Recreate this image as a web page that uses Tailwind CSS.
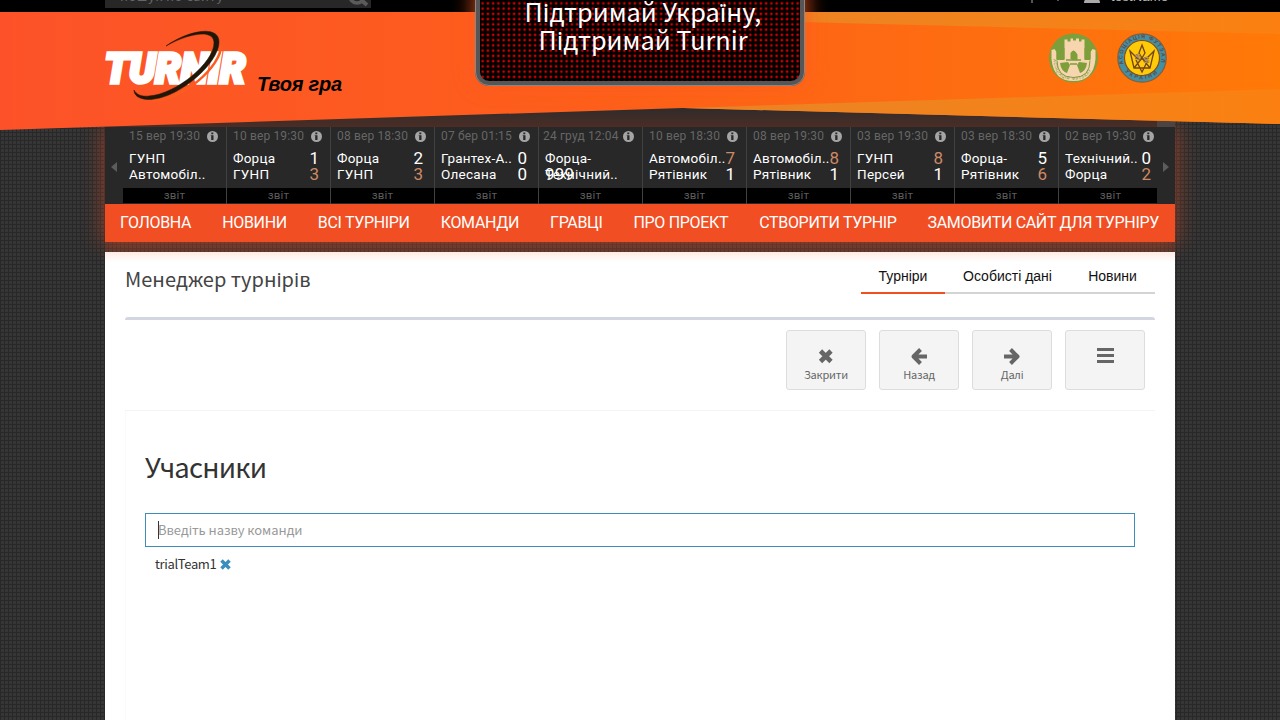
<!DOCTYPE html>
<html lang="uk">
<head>
<meta charset="utf-8">
<title>Turnir</title>
<script src="https://cdn.jsdelivr.net/npm/@tailwindcss/browser@4"></script>
</head>
<body class="h-[720px] overflow-hidden bg-[#262626] bg-[linear-gradient(90deg,#282828_1px,transparent_1px),linear-gradient(#282828_1px,#363636_1px)] bg-[size:4px_4px] font-['Noto_Sans_CJK_JP','Noto_Sans',sans-serif]">
<div class="relative h-[720px] overflow-hidden">

<header class="relative z-10 h-[127px]">
  <svg class="absolute left-0 top-0" width="1280" height="135" viewBox="0 0 1280 135">
    <defs>
      <linearGradient id="o" x1="0" x2="1" y1="0" y2="0"><stop offset="0" stop-color="#fd5229"/><stop offset=".5" stop-color="#fd601a"/><stop offset="1" stop-color="#ff7907"/></linearGradient>
      <linearGradient id="h" x1="0" x2="1" y1="0" y2="0"><stop offset="0" stop-color="#e98527"/><stop offset="1" stop-color="#fb8011"/></linearGradient>
      <linearGradient id="g" x1="0" x2="0" y1="0" y2="1"><stop offset="0" stop-color="#292b2d"/><stop offset="1" stop-color="#4b2d25"/></linearGradient>
      <filter id="b" x="-20%" y="-50%" width="140%" height="200%"><feGaussianBlur stdDeviation="10"/></filter>
    </defs>
    <rect x="105" y="104" width="1070" height="23" fill="url(#g)"/>
    <rect x="1157" y="118" width="18" height="9" fill="#4c4342"/>
    <rect width="1280" height="12"/>
    <path d="M0 12H1280V124L683 108L0 130Z" fill="url(#o)"/>
    <path d="M800 12H1280V34L800 22ZM683 108L1280 89V124Z" fill="url(#h)"/>
    <rect x="473" y="-20" width="334" height="107" rx="14" fill="#ff5a1c" opacity=".75" filter="url(#b)"/>
  </svg>
  <div class="relative mx-auto flex h-full w-[1070px] justify-between">
    <div class="w-[266px]">
      <div class="relative h-2 overflow-hidden bg-[#272727]">
        <span class="absolute left-[15px] top-[-14px] text-[13px] leading-5 tracking-[0.4px] text-[#666]">пошук по сайту</span>
        <svg class="absolute right-0.5 top-[-13px]" width="20" height="20" viewBox="0 0 20 20" fill="none" stroke="#5b5b5b" stroke-width="3.5"><circle cx="8" cy="9" r="7"/><path d="M12 13L18 18" stroke-width="4"/></svg>
      </div>
      <div class="flex pt-[20px]">
        <svg width="148" height="76" viewBox="0 0 148 76">
          <text x="-0.500" y="55" textLength="141" lengthAdjust="spacingAndGlyphs" font-family="Roboto" font-weight="900" font-style="italic" font-size="43" fill="#fff" stroke="#fff" stroke-width="3.500" stroke-linejoin="miter">TURNIR</text>
          <path d="M113 15C114 36 74 71 44 71" transform="translate(3 2)" fill="none" stroke="#fd5b20" stroke-width="2.500"/>
          <path d="M61 18C82 3 114 -4 114 14C114 36 72 72 43 71.500C33 71 29 67 29 62C31 66 36 69 44 68C72 66 109 34 109 15C109 0 82 6 61 18Z" fill="#211708" stroke="#211708" stroke-width=".5"/>
        </svg>
        <div class="whitespace-nowrap pl-1 pt-[44px] font-['Liberation_Sans'] text-[20px] font-bold italic leading-6 tracking-[-0.2px] text-black">Твоя гра</div>
      </div>
    </div>
    <div class="absolute left-[370px] top-[-20px] h-[106px] w-[330px] rounded-[14px] border-[5px] border-[#565656] bg-black bg-[radial-gradient(circle,#d00000_0.9px,#300_1.5px,transparent_2px)] bg-[size:5.25px_5.25px] pl-[6px] pt-[12px] text-center text-[25.3px] leading-7 text-white outline-1 -outline-offset-1 outline-[#888]">
      <div>Підтримай Україну,</div><div>Підтримай Turnir</div>
    </div>
    <div class="flex">
      <svg width="150" height="90" viewBox="1025 0 150 90">
        <path d="M1032 0v3M1058 0v1" stroke="#555" stroke-width="2"/>
        <path d="M1084 3q0-4 4-5h8q4 1 4 5z" fill="#aaa"/>
        <text x="1111" y="0.5" font-family="Liberation Sans" font-size="13" fill="#bbb" textLength="57">testName</text>
        <circle cx="1073.500" cy="58" r="24.500" fill="#7c9f3c"/>
        <path d="M1064.500 60V39.500h3v2h3v-3h2.500v2h3v-2h3v3h2.500v-2h3v20.500h-7v-5.500q-3-4-6 0v5.500z" fill="#f7d5ae"/>
        <path d="M1051.500 50l3-1 2 3v8h34v-8l2-3 3 1v9q-2 22-22 22t-22-22z" fill="#f7d5ae"/>
        <path d="M1056.500 48h8v11h-8zM1084.500 48h6v11h-6z" fill="#7c9f3c"/>
        <path d="M1070.500 59v-6q3-5 6 0v6z" fill="#7c9f3c"/>
        <path d="M1060 63l8-1 2 3-3 8q-6-2-7-10zM1087 63l-8-1-2 3 3 8q6-2 7-10z" fill="#7c9f3c"/>
        <path d="M1057 60.500q0 17 16.500 17t16.500-17" fill="none" stroke="#7c9f3c" stroke-width="1"/>
        <path d="M1066 60h15M1070 64h7" stroke="#7c9f3c" stroke-width="1.500"/>
        <path id="e1" d="M1053.500 59q1 21 20 21t20-21" fill="none"/>
        <text font-family="Liberation Sans" font-size="4" fill="#6c8c35"><textPath href="#e1" textLength="54">АСОЦІАЦІЯ ФУТЗАЛУ</textPath></text>
        <circle cx="1142" cy="58" r="24.200" fill="#458fa3" stroke="#80603c" stroke-width="1.200"/>
        <circle cx="1142" cy="58" r="17.500" fill="#ffca08" stroke="#80501c" stroke-width="1.200"/>
        <path id="e2" d="M1123.500 64a19.500 19.500 0 1 1 37 0" fill="none"/>
        <path id="e3" d="M1125 71.500a22.500 22.500 0 0 0 34 0" fill="none"/>
        <g font-family="Liberation Sans" font-weight="700" font-size="5.500" fill="#5a4a48"><text><textPath href="#e2" textLength="76">АСОЦІАЦІЯ  ФУТЗАЛУ</textPath></text><text><textPath href="#e3" textLength="36">УКРАЇНИ</textPath></text></g>
        <path d="M1142 45l3 8-3 5-3-5zM1130 51l4 17h16l4-17-8 8h-8zM1136 60l6 12 6-12M1134 68l8-10 8 10" fill="none" stroke="#714417" stroke-width="1.300"/>
        <g font-family="Liberation Sans" font-weight="700" font-size="8.500" fill="#fff1d0" stroke="#714417" stroke-width=".5"><text x="1135" y="60">S</text><text x="1143.500" y="63">S</text></g>
      </svg>
    </div>
  </div>
</header>

<div class="relative mx-auto w-[1070px] shadow-[0_0_20px_2px_rgba(241,78,35,0.45)] font-['Roboto',sans-serif]">
  <div class="flex h-[77px] bg-[#282828]">
    <div class="flex w-[18px] items-center justify-center"><svg class="mt-[2px]" width="6" height="10"><path d="M6 0V10L0 5Z" fill="#5c5c5c"/></svg></div>
    <div id="matches" class="flex w-[1034px] overflow-hidden"></div>
    <div class="flex w-[18px] items-center justify-center"><svg class="mt-[2px]" width="6" height="10"><path d="M0 0V10L6 5Z" fill="#5c5c5c"/></svg></div>
  </div>
  <nav id="nav" class="flex h-[38px] items-center justify-between bg-[#f14e23] pl-[15px] pr-4 text-[16px] tracking-[-0.32px] text-white"></nav>
</div>
<div class="mx-auto h-[10px] w-[1070px] bg-[#f14e23]/15"></div>

<main class="relative mx-auto h-[468px] w-[1070px] bg-white bg-[linear-gradient(#ffeae4,#fff_10px)] bg-no-repeat px-5">
  <div class="flex h-[65px] justify-between">
    <h1 class="pt-[11px] text-[20px] leading-8 text-[#444]">Менеджер турнірів</h1>
    <div class="mt-[5px] flex h-[37px] font-['Liberation_Sans'] text-[14px] leading-[38px] text-[#111]">
      <a class="w-[84px] border-b-2 border-[#f14e23] text-center">Турніри</a>
      <a class="w-[125px] border-b-2 border-[#d4d4d4] text-center">Особисті дані</a>
      <a class="w-[85px] border-b-2 border-[#d4d4d4] text-center">Новини</a>
    </div>
  </div>
  <section class="rounded-[3px] border-t-[3px] border-[#d2d6e0]">
    <div class="flex h-[91px] justify-end gap-[13px] border-b border-[#f4f4f4] pr-[10px] pt-[10px] text-[11px] leading-4 tracking-[-0.2px] text-[#666]">
      <button class="flex h-[60px] w-20 flex-col items-center rounded-[3px] border border-[#ddd] bg-[#f4f4f4] pt-[15px]"><svg width="20" height="20" viewBox="0 0 20 20"><path d="M4.500 5L15 15.500M15 5L4.500 15.500" stroke="#666" stroke-width="4.600"/></svg><span>Закрити</span></button>
      <button class="flex h-[60px] w-20 flex-col items-center rounded-[3px] border border-[#ddd] bg-[#f4f4f4] pt-[15px]"><svg width="20" height="20" viewBox="0 0 20 20" fill="none" stroke="#666" stroke-width="4" stroke-linejoin="round"><path d="M11.500 3.500L4.500 10.500L11.500 17.500M5 10.500H18"/></svg><span>Назад</span></button>
      <button class="flex h-[60px] w-20 flex-col items-center rounded-[3px] border border-[#ddd] bg-[#f4f4f4] pt-[15px]"><svg width="20" height="20" viewBox="0 0 20 20" fill="none" stroke="#666" stroke-width="4" stroke-linejoin="round"><path d="M8.500 3.500L15.500 10.500L8.500 17.500M15 10.500H2"/></svg><span>Далі</span></button>
      <button class="flex h-[60px] w-20 flex-col items-center rounded-[3px] border border-[#ddd] bg-[#f4f4f4] pt-[15px]"><svg width="20" height="20" viewBox="0 0 20 20" stroke="#666" stroke-width="3"><path d="M2 3.500H19M2 9.500H19M2 15.500H19"/></svg></button>
    </div>
    <div class="h-[309px] border-l border-[#fafafa] pl-[19px] pr-5 pt-[35px]">
      <h2 class="text-[27.5px] leading-10 tracking-[-0.8px] text-[#333]">Учасники</h2>
      <div class="mt-[27px] flex h-[34px] items-center border border-[#3c8dbc] pl-3 text-[13px] text-[#999]"><i class="h-[18px] w-px bg-[#333]"></i><span class="-ml-px tracking-[-0.05px]">Введіть назву команди</span></div>
      <div class="flex items-center gap-1 pl-[10px] pt-[7px] text-[13px] leading-5 tracking-[-0.35px] text-[#333]"><span>trialTeam1</span><svg class="mt-px" width="11" height="11" viewBox="0 0 11 11"><path d="M1.500 1.500L9.500 9.500M9.500 1.500L1.500 9.500" stroke="#3c8dbc" stroke-width="3.500"/></svg></div>
    </div>
  </section>
</main>
</div>
<script>
const matches = [
  ['15 вер 19:30','ГУНП','','Автомобіл..',''],
  ['10 вер 19:30','Форца','1','ГУНП','3'],
  ['08 вер 18:30','Форца','2','ГУНП','3'],
  ['07 бер 01:15','Грантех-А..','0','Олесана','0'],
  ['24 груд 12:04','Форца-','','Технічний..','','999'],
  ['10 вер 18:30','Автомобіл..','7','Рятівник','1'],
  ['08 вер 19:30','Автомобіл..','8','Рятівник','1'],
  ['03 вер 19:30','ГУНП','8','Персей','1'],
  ['03 вер 18:30','Форца-','5','Рятівник','6'],
  ['02 вер 19:30','Технічний..','0','Форца','2']];
const score = (a, hot) => a && `<b class="absolute top-0 right-[11px] text-[17px] font-normal tracking-normal ${hot ? 'text-[#cd8a66]' : 'text-white'}">${a}</b>`;
document.getElementById('matches').innerHTML = matches.map(([d,a,x,b,y,extra]) => `
  <div class="w-[104px] shrink-0 border-r border-[#414141]">
    <div class="flex h-[18px] items-center justify-between pr-2 ${extra ? 'pl-1' : 'pl-[6px]'} text-[12px] text-[#666]"><span class="whitespace-nowrap tracking-[0.15px]">${d}</span>
      <svg class="mt-px" width="11" height="11" viewBox="0 0 11 11"><circle cx="5.500" cy="5.500" r="5.500" fill="#a5a5a5"/><path d="M4.300 1.500h2v1.800h-2zM3.700 4.300h2.800v4.800h-2.300v-4h-.5z" fill="#282828"/></svg></div>
    <div class="relative mt-[5px] h-4 pl-[6px] text-[13.5px] leading-4 tracking-[0.25px] text-white">${a}${score(x, +x > +y)}</div>
    <div class="relative h-4 pl-[6px] text-[13.5px] leading-4 tracking-[0.25px] text-white">${b}${score(y, +y > +x)}${extra ? '<b class="absolute left-[6px] top-0 text-[17px] font-normal">999</b>' : ''}</div>
    <div class="mt-[6px] h-[15px] bg-black text-center text-[11.5px] leading-[15px] tracking-[0.2px] text-[#5c5c5c]">звіт</div>
  </div>`).join('');
document.getElementById('nav').innerHTML = ['ГОЛОВНА','НОВИНИ','ВСІ ТУРНІРИ','КОМАНДИ','ГРАВЦІ','ПРО ПРОЕКТ','СТВОРИТИ ТУРНІР','ЗАМОВИТИ САЙТ ДЛЯ ТУРНІРУ'].map(t => `<a class="whitespace-nowrap">${t}</a>`).join('');
</script>
</body>
</html>
